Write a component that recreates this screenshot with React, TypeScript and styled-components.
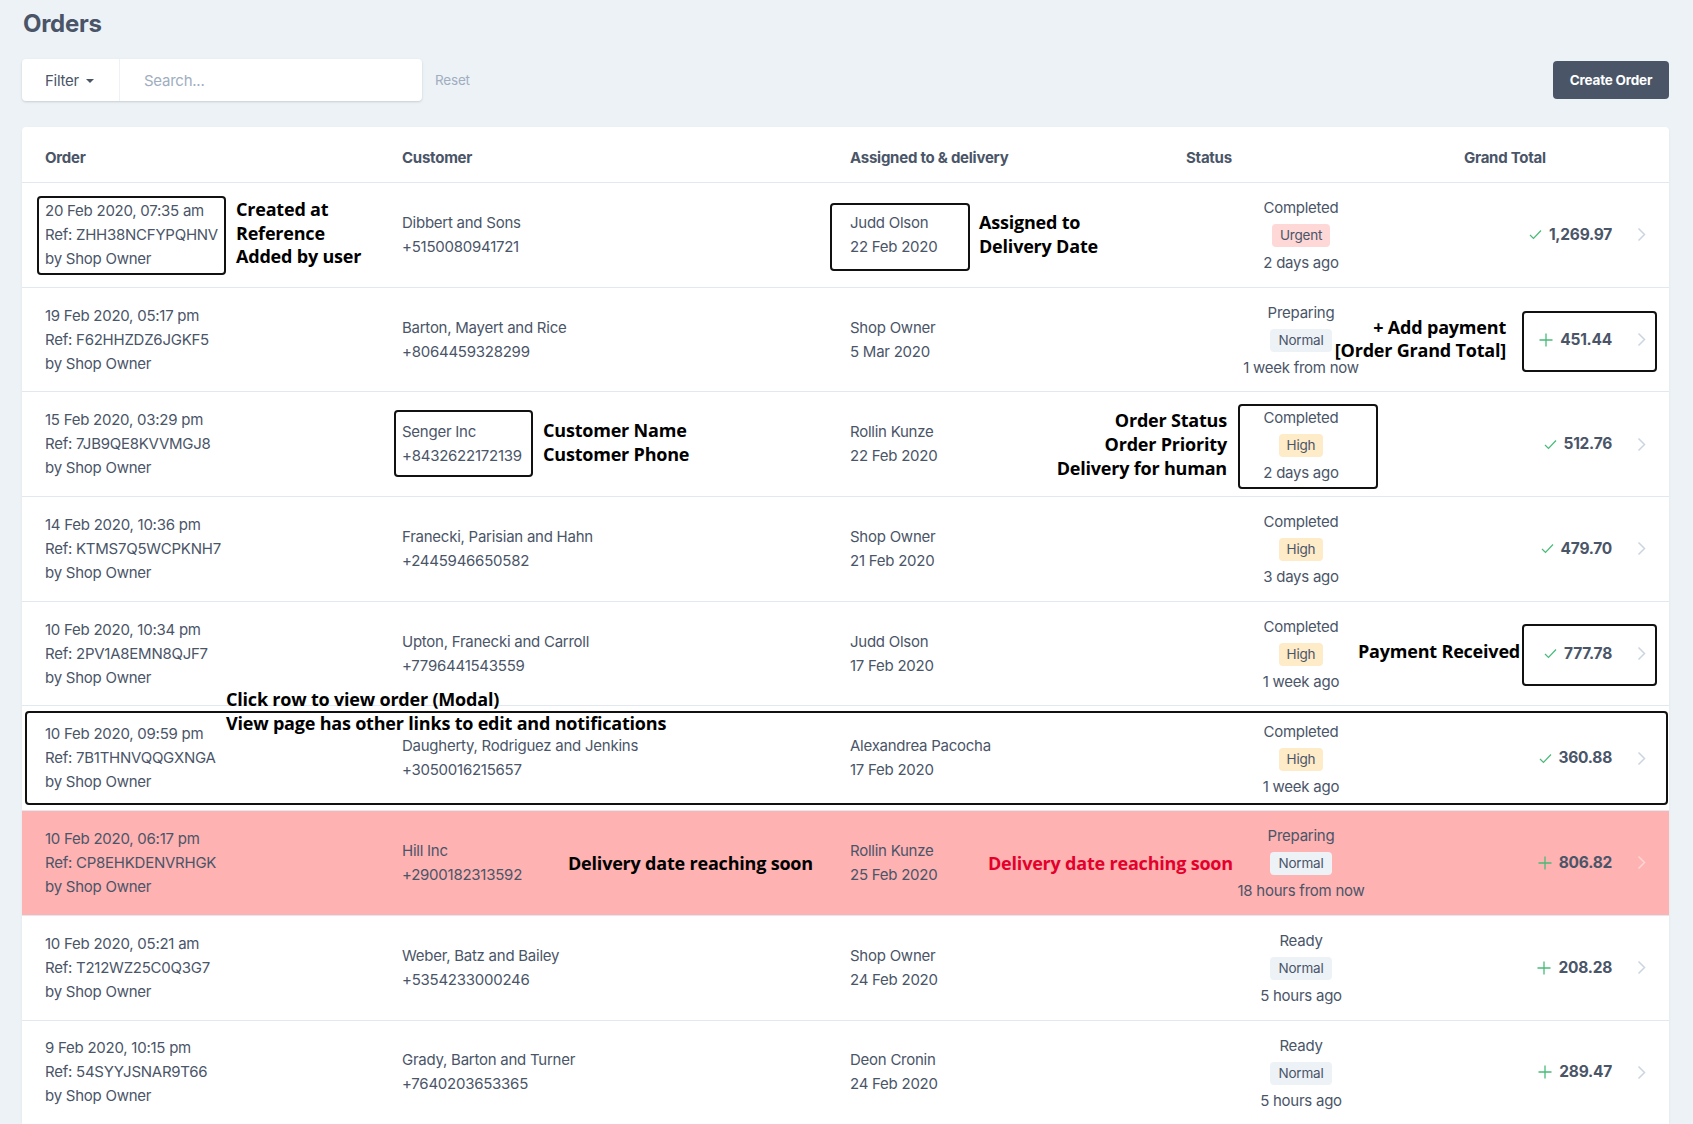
import React from 'react';
import styled, { createGlobalStyle, css } from 'styled-components';

const GlobalStyle = createGlobalStyle`
  html, body { margin: 0; padding: 0; background: #edf2f7; }
  body { font-family: Inter, "Noto Sans", sans-serif; color: #4a5568; }
  * { box-sizing: border-box; }
`;

const Page = styled.div`
  padding: 8px 24px 0 22px;
`;

const Title = styled.h1`
  margin: 0 0 0 1px;
  font-size: 24px;
  line-height: 32px;
  font-weight: 700;
  letter-spacing: -0.3px;
  color: #4a5568;
`;

const Toolbar = styled.div`
  display: flex;
  align-items: center;
  margin-top: 19px;
  height: 42px;
`;

const FilterCard = styled.div`
  display: flex;
  width: 400px;
  height: 42px;
  background: #fff;
  border-radius: 4px;
  box-shadow: 0 1px 3px rgba(0, 0, 0, 0.1), 0 1px 2px rgba(0, 0, 0, 0.06);
`;

const FilterButton = styled.div`
  display: flex;
  align-items: center;
  gap: 7px;
  width: 98px;
  padding-left: 23px;
  border-right: 1px solid #edf2f7;
  font-size: 15px;
  letter-spacing: -0.25px;
  color: #4a5568;
`;

const Caret = styled.span`
  width: 0;
  height: 0;
  border-left: 4px solid transparent;
  border-right: 4px solid transparent;
  border-top: 4px solid #4a5568;
  margin-top: 2px;
`;

const SearchInput = styled.input`
  flex: 1;
  border: none;
  outline: none;
  background: transparent;
  padding-left: 24px;
  font-family: inherit;
  font-size: 15px;
  letter-spacing: -0.25px;
  color: #4a5568;
  &::placeholder { color: #a0aec0; }
`;

const ResetLink = styled.span`
  margin-left: 13px;
  font-size: 13.5px;
  letter-spacing: -0.2px;
  color: #a0aec0;
`;

const CreateButton = styled.button`
  margin-left: auto;
  width: 116px;
  height: 38px;
  border: none;
  border-radius: 4px;
  background: #4a5568;
  color: #fff;
  font-family: inherit;
  font-size: 13.5px;
  letter-spacing: -0.2px;
  font-weight: 700;
`;

const TableCard = styled.div`
  margin-top: 26px;
  background: #fff;
  border-radius: 4px;
  box-shadow: 0 1px 3px rgba(0, 0, 0, 0.06);
`;

const columns = '380px 448px 336px 230px 1fr';

const HeaderRow = styled.div`
  display: grid;
  grid-template-columns: ${columns};
  padding: 19px 0 12px;
  border-bottom: 1px solid #e2e8f0;
  font-size: 15px;
  letter-spacing: -0.25px;
  line-height: 24px;
  font-weight: 700;
  color: #4a5568;
`;

const HeaderCell = styled.div<{ $pad?: number }>`
  padding-left: ${(p) => p.$pad ?? 0}px;
`;

const Row = styled.div<{ $alert?: boolean }>`
  position: relative;
  display: grid;
  grid-template-columns: ${columns};
  align-items: center;
  height: 104.7px;
  border-bottom: 1px solid #e2e8f0;
  background: ${(p) => (p.$alert ? '#feb2b2' : '#fff')};
  font-size: 15px;
  letter-spacing: -0.25px;
  line-height: 24px;
  color: #4a5568;
`;

const OrderCell = styled.div`
  padding-left: 23px;
  white-space: nowrap;
`;

const TextCell = styled.div`
  white-space: nowrap;
`;

const StatusCell = styled.div`
  display: flex;
  flex-direction: column;
  align-items: center;
  padding-top: 2px;
  white-space: nowrap;
`;

const badgeColors = {
  Urgent: '#fed7d7',
  High: '#feebc8',
  Normal: '#edf2f7',
} as const;

const Badge = styled.span<{ $kind: keyof typeof badgeColors }>`
  display: inline-block;
  margin: 4px 0 4px;
  padding: 0 8px;
  height: 23px;
  line-height: 23px;
  border-radius: 4px;
  font-size: 13.5px;
  letter-spacing: -0.2px;
  background: ${(p) => badgeColors[p.$kind]};
  color: #4a5568;
`;

const TotalCell = styled.div`
  display: flex;
  align-items: center;
  justify-content: flex-end;
  padding-right: 23px;
`;

const Amount = styled.span`
  display: flex;
  align-items: center;
  gap: 7px;
  font-weight: 700;
  font-size: 15.5px;
  color: #4a5568;
`;

const ChevronWrap = styled.span`
  display: flex;
  margin-left: 25px;
`;

const Callout = styled.div<{ $x: number; $y: number; $w: number; $h: number }>`
  position: absolute;
  left: ${(p) => p.$x}px;
  top: ${(p) => p.$y}px;
  width: ${(p) => p.$w}px;
  height: ${(p) => p.$h}px;
  border: 2px solid #111;
  border-radius: 4px;
  pointer-events: none;
`;

const Note = styled.div<{ $x?: number; $right?: number; $y: number; $red?: boolean }>`
  position: absolute;
  top: ${(p) => p.$y}px;
  ${(p) =>
    p.$right !== undefined
      ? css`
          right: ${p.$right}px;
          text-align: right;
        `
      : css`
          left: ${p.$x}px;
        `}
  font-family: "Open Sans", "Noto Sans", sans-serif;
  font-weight: 700;
  font-size: 18px;
  letter-spacing: -0.2px;
  line-height: 23.7px;
  color: ${(p) => (p.$red ? '#e3002b' : '#000')};
  white-space: nowrap;
  z-index: 2;
`;

const CheckIcon = () => (
  <svg width="13" height="11" viewBox="0 0 13 11" fill="none">
    <path d="M1 6l3.5 3.5L12 1.5" stroke="#48bb78" strokeWidth="1.2" />
  </svg>
);

const PlusIcon = () => (
  <svg width="14" height="14" viewBox="0 0 14 14" fill="none">
    <path d="M7 0.5v13M0.5 7h13" stroke="#48bb78" strokeWidth="1.3" />
  </svg>
);

const Chevron = ({ light }: { light?: boolean }) => (
  <svg width="9" height="15" viewBox="0 0 9 15" fill="none">
    <path d="M1.5 1.5l6 6-6 6" stroke={light ? '#fcd5d5' : '#cbd5e0'} strokeWidth="1.5" />
  </svg>
);

type Order = {
  created: string;
  ref: string;
  customer: string;
  phone: string;
  assignee: string;
  delivery: string;
  status: string;
  priority: keyof typeof badgeColors;
  when: string;
  paid: boolean;
  total: string;
  alert?: boolean;
};

const orders: Order[] = [
  { created: '20 Feb 2020, 07:35 am', ref: 'ZHH38NCFYPQHNV', customer: 'Dibbert and Sons', phone: '+5150080941721', assignee: 'Judd Olson', delivery: '22 Feb 2020', status: 'Completed', priority: 'Urgent', when: '2 days ago', paid: true, total: '1,269.97' },
  { created: '19 Feb 2020, 05:17 pm', ref: 'F62HHZDZ6JGKF5', customer: 'Barton, Mayert and Rice', phone: '+8064459328299', assignee: 'Shop Owner', delivery: '5 Mar 2020', status: 'Preparing', priority: 'Normal', when: '1 week from now', paid: false, total: '451.44' },
  { created: '15 Feb 2020, 03:29 pm', ref: '7JB9QE8KVVMGJ8', customer: 'Senger Inc', phone: '+8432622172139', assignee: 'Rollin Kunze', delivery: '22 Feb 2020', status: 'Completed', priority: 'High', when: '2 days ago', paid: true, total: '512.76' },
  { created: '14 Feb 2020, 10:36 pm', ref: 'KTMS7Q5WCPKNH7', customer: 'Franecki, Parisian and Hahn', phone: '+2445946650582', assignee: 'Shop Owner', delivery: '21 Feb 2020', status: 'Completed', priority: 'High', when: '3 days ago', paid: true, total: '479.70' },
  { created: '10 Feb 2020, 10:34 pm', ref: '2PV1A8EMN8QJF7', customer: 'Upton, Franecki and Carroll', phone: '+7796441543559', assignee: 'Judd Olson', delivery: '17 Feb 2020', status: 'Completed', priority: 'High', when: '1 week ago', paid: true, total: '777.78' },
  { created: '10 Feb 2020, 09:59 pm', ref: '7B1THNVQQGXNGA', customer: 'Daugherty, Rodriguez and Jenkins', phone: '+3050016215657', assignee: 'Alexandrea Pacocha', delivery: '17 Feb 2020', status: 'Completed', priority: 'High', when: '1 week ago', paid: true, total: '360.88' },
  { created: '10 Feb 2020, 06:17 pm', ref: 'CP8EHKDENVRHGK', customer: 'Hill Inc', phone: '+2900182313592', assignee: 'Rollin Kunze', delivery: '25 Feb 2020', status: 'Preparing', priority: 'Normal', when: '18 hours from now', paid: false, total: '806.82', alert: true },
  { created: '10 Feb 2020, 05:21 am', ref: 'T212WZ25C0Q3G7', customer: 'Weber, Batz and Bailey', phone: '+5354233000246', assignee: 'Shop Owner', delivery: '24 Feb 2020', status: 'Ready', priority: 'Normal', when: '5 hours ago', paid: false, total: '208.28' },
  { created: '9 Feb 2020, 10:15 pm', ref: '54SYYJSNAR9T66', customer: 'Grady, Barton and Turner', phone: '+7640203653365', assignee: 'Deon Cronin', delivery: '24 Feb 2020', status: 'Ready', priority: 'Normal', when: '5 hours ago', paid: false, total: '289.47' },
];

const annotations: Record<number, React.ReactNode> = {
  0: (
    <>
      <Callout $x={15} $y={12.5} $w={189} $h={79} />
      <Note $x={214} $y={15}>Created at<br />Reference<br />Added by user</Note>
      <Callout $x={808} $y={19.5} $w={140} $h={68} />
      <Note $x={957} $y={28}>Assigned to<br />Delivery Date</Note>
    </>
  ),
  1: (
    <>
      <Note $right={163} $y={28}>+ Add payment<br />[Order Grand Total]</Note>
      <Callout $x={1500} $y={23} $w={135} $h={61} />
    </>
  ),
  2: (
    <>
      <Callout $x={372} $y={18} $w={139} $h={67} />
      <Note $x={521} $y={27}>Customer Name<br />Customer Phone</Note>
      <Note $right={442} $y={17}>Order Status<br />Order Priority<br />Delivery for human</Note>
      <Callout $x={1216} $y={12} $w={140} $h={85} />
    </>
  ),
  4: (
    <>
      <Note $x={1336} $y={38}>Payment Received</Note>
      <Callout $x={1500} $y={22} $w={135} $h={62} />
    </>
  ),
  5: (
    <>
      <Callout $x={3} $y={5} $w={1643} $h={94} />
      <Note $x={204} $y={-18}>Click row to view order (Modal)<br />View page has other links to edit and notifications</Note>
    </>
  ),
  6: (
    <>
      <Note $x={546} $y={41}>Delivery date reaching soon</Note>
      <Note $x={966} $y={41} $red>Delivery date reaching soon</Note>
    </>
  ),
};

export default function App() {
  return (
    <>
      <GlobalStyle />
      <Page>
        <Title>Orders</Title>
        <Toolbar>
          <FilterCard>
            <FilterButton>
              Filter <Caret />
            </FilterButton>
            <SearchInput placeholder="Search..." />
          </FilterCard>
          <ResetLink>Reset</ResetLink>
          <CreateButton>Create Order</CreateButton>
        </Toolbar>
        <TableCard>
          <HeaderRow>
            <HeaderCell $pad={23}>Order</HeaderCell>
            <HeaderCell>Customer</HeaderCell>
            <HeaderCell>Assigned to &amp; delivery</HeaderCell>
            <HeaderCell>Status</HeaderCell>
            <HeaderCell $pad={48}>Grand Total</HeaderCell>
          </HeaderRow>
          {orders.map((o, i) => (
            <Row key={o.ref} $alert={o.alert}>
              <OrderCell>
                <div>{o.created}</div>
                <div>Ref: {o.ref}</div>
                <div>by Shop Owner</div>
              </OrderCell>
              <TextCell>
                <div>{o.customer}</div>
                <div>{o.phone}</div>
              </TextCell>
              <TextCell>
                <div>{o.assignee}</div>
                <div>{o.delivery}</div>
              </TextCell>
              <StatusCell>
                <div>{o.status}</div>
                <Badge $kind={o.priority}>{o.priority}</Badge>
                <div>{o.when}</div>
              </StatusCell>
              <TotalCell>
                <Amount>
                  {o.paid ? <CheckIcon /> : <PlusIcon />}
                  {o.total}
                </Amount>
                <ChevronWrap>
                  <Chevron light={o.alert} />
                </ChevronWrap>
              </TotalCell>
              {annotations[i]}
            </Row>
          ))}
        </TableCard>
      </Page>
    </>
  );
}
